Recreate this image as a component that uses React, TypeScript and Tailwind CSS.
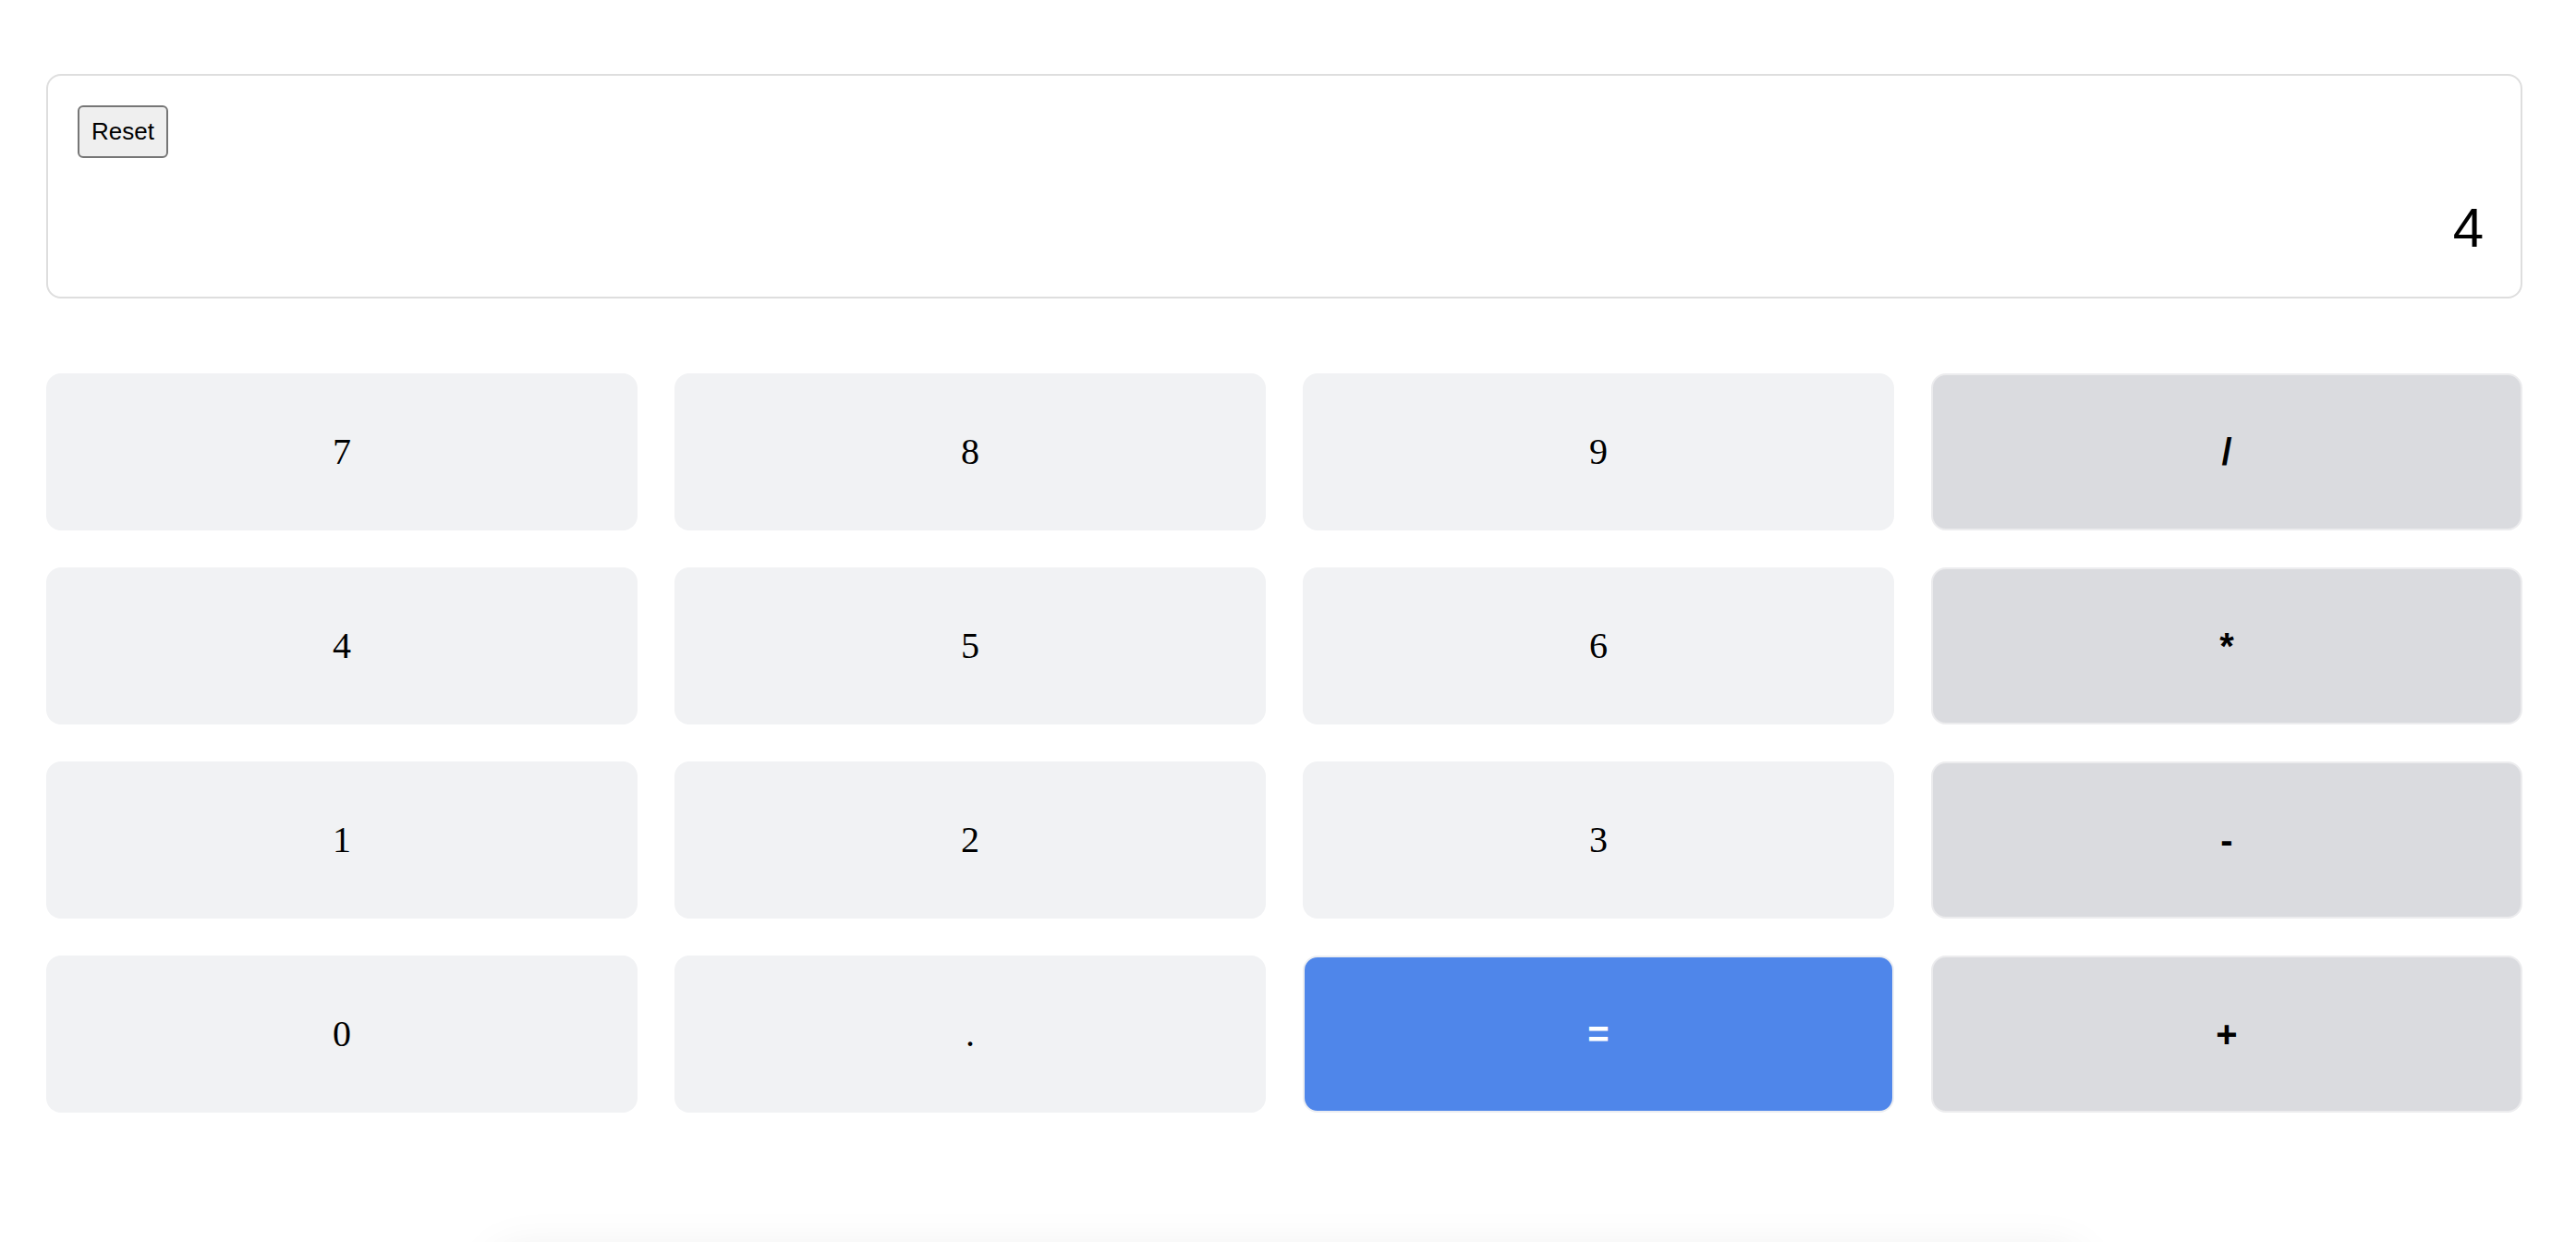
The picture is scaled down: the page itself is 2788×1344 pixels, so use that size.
const digitKeys = ["7", "8", "9", "/", "4", "5", "6", "*", "1", "2", "3", "-", "0", ".", "=", "+"];

const operators = ["/", "*", "-", "+"];

function Key({ label }: { label: string }) {
  if (label === "=") {
    return (
      <button className="h-[170px] rounded-[16px] border-2 border-[#eceef2] bg-[#4f86ea] text-[40px] font-bold text-white [font-family:'Liberation_Sans',Arial,sans-serif]">
        {label}
      </button>
    );
  }
  if (operators.includes(label)) {
    return (
      <button className="h-[170px] rounded-[16px] border-2 border-[#ececee] bg-[#dadbdf] text-[40px] font-bold text-black [font-family:'Liberation_Sans',Arial,sans-serif]">
        {label}
      </button>
    );
  }
  return (
    <button className="h-[170px] rounded-[16px] bg-[#f1f2f4] text-[40px] text-black [font-family:'Liberation_Serif','Times_New_Roman',serif]">
      {label}
    </button>
  );
}

export default function App() {
  return (
    <div className="h-[1344px] overflow-hidden bg-white [font-family:'Liberation_Serif',serif]">
      <div className="w-[2680px] ml-[50px] pt-[80px]">
        <div className="flex h-[243px] flex-col rounded-[16px] border-2 border-[#dedede] bg-white pl-[32px] pr-[40px] pt-[32px]">
          <div>
            <button className="h-[57px] rounded-[6px] border-2 border-[#767676] bg-[#efefef] px-[13px] text-[26px] text-black [font-family:'Liberation_Sans',Arial,sans-serif]">
              Reset
            </button>
          </div>
          <div className="mt-[40px] text-right text-[60px] leading-[72px] text-black [font-family:'Liberation_Sans',Arial,sans-serif]">
            4
          </div>
        </div>

        <div className="mt-[81px] grid grid-cols-4 gap-[40px]">
          {digitKeys.map((k) => (
            <Key key={k} label={k} />
          ))}
        </div>
      </div>

      <div className="mx-auto mt-[150px] h-[200px] w-[1720px] rounded-[24px] bg-white shadow-[0_0_50px_rgba(0,0,0,0.08)]" />
    </div>
  );
}
